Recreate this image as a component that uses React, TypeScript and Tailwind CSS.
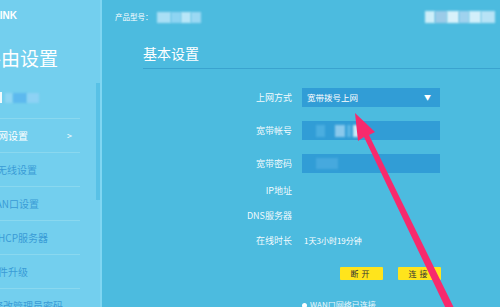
import React from "react";

const NAV = [
  { label: "上网设置", end: "w-[28px]", active: true },
  { label: "无线设置", end: "w-[37px]" },
  { label: "LAN口设置", end: "w-[39px]" },
  { label: "DHCP服务器", end: "w-[48px]" },
  { label: "软件升级", end: "w-[28px]" },
  { label: "修改管理员密码", end: "w-[63px]" },
];

function Blur({ className }: { className: string }) {
  return <div className={`blur-[1px] ${className}`} />;
}

function Label({ children }: { children: React.ReactNode }) {
  return (
    <div className="w-[190px] shrink-0 text-right text-[9px] leading-none text-white/95">
      {children}
    </div>
  );
}

export default function App() {
  return (
    <div
      className="relative flex h-[307px] w-[500px] overflow-hidden bg-[#4cbbdf]"
      style={{ fontFamily: '"Noto Sans CJK SC", "Noto Sans", sans-serif' }}
    >
      {/* sidebar */}
      <aside className="relative flex w-[102px] shrink-0 flex-col overflow-hidden bg-[#73cfee]">
        <div className="mt-[9px] flex h-[12px] w-[17px] items-center justify-end whitespace-nowrap text-[10px] font-bold text-white" style={{ fontFamily: '"Liberation Sans", Arial, sans-serif' }}>
          TP-LINK
        </div>
        <div className="mt-[27px] flex h-[26px] w-[58px] items-center justify-end whitespace-nowrap text-[19px] leading-none text-white">
          路由设置
        </div>
        <div className="mt-[25px] flex h-[12px] items-center gap-[3px]">
          <div className="h-[11px] w-[2px] bg-white/90" />
          <Blur className="h-[10px] w-[8px] bg-[#8fd6f3]" />
          <Blur className="-ml-[3px] h-[10px] w-[14px] bg-[#5db9ee]" />
          <Blur className="-ml-[3px] h-[10px] w-[12px] bg-[#8dd2f4]" />
        </div>
        <div className="mt-[15px] w-[80px] border-t border-[#8ad8ef]">
          {NAV.map((n) => (
            <div key={n.label} className="flex h-[34px] items-center border-b border-[#8ad8ef]">
              <div
                className={`flex ${n.end} justify-end whitespace-nowrap text-[10px] leading-none ${
                  n.active ? "text-white" : "text-[#3a9cd6]"
                }`}
              >
                {n.label}
              </div>
              {n.active ? <span className="ml-auto mr-[8px] text-[9px] text-white">&gt;</span> : null}
            </div>
          ))}
        </div>
        {/* scrollbar */}
        <div className="absolute left-[96px] top-[83px] h-[117px] w-[4px] bg-[#58c1e6]" />
        <div className="absolute right-0 top-0 h-full w-[2px] bg-[#7fd6f2]" />
      </aside>

      {/* main */}
      <main className="flex-1">
        <div className="flex h-[34px] items-center pl-[13px] pr-[5px]">
          <span className="text-[7.5px] text-white">产品型号：</span>
          <Blur className="ml-[4px] h-[11px] w-[14px] bg-[#a9dff5]" />
          <Blur className="h-[11px] w-[10px] bg-[#8ed4f2]" />
          <Blur className="h-[11px] w-[10px] bg-[#b8e6f8]" />
          <Blur className="h-[11px] w-[10px] bg-[#9bd8f3]" />
          <div className="ml-auto flex">
            <Blur className="h-[12px] w-[10px] bg-[#cdeef9]" />
            <Blur className="h-[12px] w-[12px] bg-[#9bcbe8]" />
            <Blur className="h-[12px] w-[12px] bg-[#d8f1fa]" />
            <Blur className="h-[12px] w-[10px] bg-[#9fd2ee]" />
            <Blur className="h-[12px] w-[12px] bg-[#d2effa]" />
            <Blur className="h-[12px] w-[14px] bg-[#b7e3f6]" />
          </div>
        </div>

        <div className="ml-[41px] mt-[11px] border-b border-[#3aa3cf] pb-[6px]">
          <div className="text-[14px] leading-[17px] text-white">基本设置</div>
        </div>

        <div className="mt-[18px] flex flex-col">
          <div className="flex h-[20px] items-center">
            <Label>上网方式</Label>
            <div className="ml-[10px] flex h-[19px] w-[138px] items-center bg-[#319dd6] pl-[5px] pr-[9px] text-[8.5px] text-white">
              宽带拨号上网
              <span className="ml-auto text-[7px]">▼</span>
            </div>
          </div>
          <div className="mt-[14px] flex h-[19px] items-center">
            <Label>宽带帐号</Label>
            <div className="ml-[10px] flex h-[19px] w-[138px] items-center bg-[#319dd6] pl-[14px]">
              <Blur className="h-[12px] w-[9px] bg-[#4aaee0]" />
              <Blur className="ml-[10px] h-[12px] w-[10px] bg-[#8ac9ec]" />
              <Blur className="ml-[2px] h-[12px] w-[4px] bg-[#5ab6e4]" />
              <Blur className="ml-[2px] h-[12px] w-[9px] bg-[#c7e8f6]" />
            </div>
          </div>
          <div className="mt-[14px] flex h-[19px] items-center">
            <Label>宽带密码</Label>
            <div className="ml-[10px] flex h-[19px] w-[138px] items-center bg-[#319dd6] pl-[14px]">
              <Blur className="h-[11px] w-[22px] bg-[#46a9de]" />
            </div>
          </div>
          <div className="mt-[9px] flex h-[17px] items-center">
            <Label>IP地址</Label>
          </div>
          <div className="mt-[8px] flex h-[17px] items-center">
            <Label>DNS服务器</Label>
          </div>
          <div className="mt-[8px] flex h-[17px] items-center">
            <Label>在线时长</Label>
            <span className="ml-[12px] text-[8px] leading-none text-white">1天3小时19分钟</span>
          </div>
          <div className="ml-[238px] mt-[18px] flex gap-[15px]">
            <button className="flex h-[13px] w-[43px] items-center justify-center rounded-[1px] bg-[#ffe41c] text-[8px] leading-none tracking-[3px] text-[#333]">
              断开
            </button>
            <button className="flex h-[13px] w-[43px] items-center justify-center rounded-[1px] bg-[#ffe41c] text-[8px] leading-none tracking-[3px] text-[#333]">
              连接
            </button>
          </div>
          <div className="ml-[200px] mt-[21px] flex items-center gap-[3px] text-[8px] leading-none text-white/90">
            <span className="h-[5px] w-[5px] rounded-full bg-white" />
            WAN口网络已连接
          </div>
        </div>
      </main>

      {/* pink annotation arrow */}
      <svg className="pointer-events-none absolute left-0 top-0" width="500" height="307" viewBox="0 0 500 307">
        <polygon
          points="355,113 375,132 369,135 455,310 448,313 364,137 358,141"
          fill="#f72a6d"
        />
      </svg>
    </div>
  );
}
